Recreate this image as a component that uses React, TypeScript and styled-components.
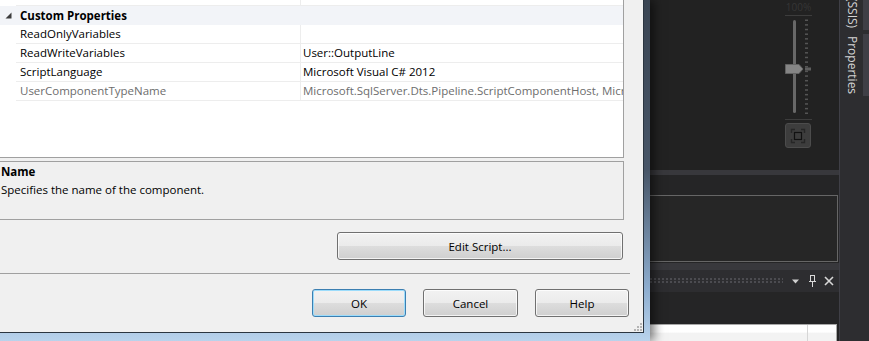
import React from 'react';
import styled, { createGlobalStyle } from 'styled-components';

const GlobalStyle = createGlobalStyle`
  html, body {
    margin: 0;
    padding: 0;
    background: #232323;
    overflow: hidden;
  }
  body {
    font-family: 'Open Sans', 'Noto Sans', sans-serif;
    font-size: 11.5px;
  }
`;

const Screen = styled.div`
  display: flex;
  width: 869px;
  height: 341px;
  overflow: hidden;
`;

/* ---------- dialog ---------- */

const DialogFrame = styled.div`
  position: relative;
  z-index: 1;
  flex: 0 0 650px;
  height: 341px;
  box-sizing: border-box;
  padding: 0 6px 8px 0;
  display: flex;
  background: linear-gradient(180deg, #3a4553 0%, #485668 50%, #8eaed0 85%, #b9d3ec 100%);
  box-shadow: 4px 0 10px rgba(0, 0, 0, 0.55);
`;

const Client = styled.div`
  flex: 1;
  display: flex;
  flex-direction: column;
  background: #f0f0f0;
  color: #000;
  border-right: 1px solid #2b3540;
  border-bottom: 1px solid #2b3540;
`;

const PropGrid = styled.div`
  width: 623px;
  height: 157px;
  background: #fff;
  border-right: 1px solid #a0a0a0;
  border-bottom: 1px solid #a0a0a0;
  overflow: hidden;
`;

const Row = styled.div<{ $h?: number }>`
  display: grid;
  grid-template-columns: 16px 285px 1fr;
  height: ${p => p.$h ?? 19}px;
`;

const Gutter = styled.div``;

const Cell = styled.div<{ $muted?: boolean; $name?: boolean }>`
  box-sizing: border-box;
  border-bottom: 1px solid #ededed;
  border-right: ${p => (p.$name ? '1px solid #ededed' : 'none')};
  padding-left: ${p => (p.$name ? 4 : 2)}px;
  line-height: 18px;
  white-space: nowrap;
  overflow: hidden;
  color: ${p => (p.$muted ? '#6d6d6d' : '#000')};
`;

const CategoryRow = styled.div`
  display: flex;
  align-items: center;
  height: 19px;
  background: #f2f4f8;
`;

const Expander = styled.div`
  width: 16px;
  display: flex;
  justify-content: center;
  align-items: center;
`;

const CategoryTitle = styled.div`
  padding-left: 4px;
  font-weight: 700;
  line-height: 19px;
`;

const DescPane = styled.div`
  margin-top: 3px;
  width: 624px;
  height: 59px;
  box-sizing: border-box;
  padding: 1px 0 0 1px;
  border-top: 1px solid #a0a0a0;
  border-bottom: 1px solid #a0a0a0;
  border-right: 1px solid #a0a0a0;
  line-height: 18px;
`;

const DescTitle = styled.div`
  font-weight: 700;
`;

const ActionRow = styled.div<{ $top: number; $right: number; $gap?: number }>`
  display: flex;
  justify-content: flex-end;
  gap: ${p => p.$gap ?? 0}px;
  margin-top: ${p => p.$top}px;
  padding-right: ${p => p.$right}px;
`;

const Button = styled.button<{ $w: number; $default?: boolean }>`
  width: ${p => p.$w}px;
  height: 28px;
  box-sizing: border-box;
  padding: 0;
  border: 1px solid ${p => (p.$default ? '#3c7fb1' : '#707070')};
  border-radius: 3px;
  background: linear-gradient(180deg, #f2f2f2 0%, #ebebeb 49%, #dddddd 51%, #cfcfcf 100%);
  box-shadow: inset 0 0 0 1px ${p => (p.$default ? '#9cdcfb' : 'rgba(255, 255, 255, 0.75)')};
  font-family: inherit;
  font-size: 11.5px;
  color: #000;
`;

const Separator = styled.div`
  margin-top: 13px;
  width: 630px;
  height: 1px;
  background: #a0a0a0;
`;

const GripRow = styled.div`
  margin-top: auto;
  display: flex;
  justify-content: flex-end;
  padding: 0 1px 1px 0;
`;

/* ---------- IDE background ---------- */

const Ide = styled.div`
  flex: 1;
  display: flex;
  background: #252526;
`;

const DesignColumn = styled.div`
  width: 189px;
  display: flex;
  flex-direction: column;
`;

const Canvas = styled.div`
  height: 170px;
  display: flex;
  justify-content: flex-end;
  padding-right: 27px;
  background: #222222;
`;

const ZoomControl = styled.div`
  width: 27px;
  display: flex;
  flex-direction: column;
  align-items: center;
`;

const ZoomLabel = styled.div`
  width: 27px;
  height: 15px;
  border-bottom: 1px solid #3d3d3d;
  text-align: center;
  font-size: 10px;
  line-height: 14px;
  color: #363636;
`;

const ZoomFoot = styled.div`
  width: 27px;
  border-top: 1px solid #3d3d3d;
  padding-top: 3px;
  display: flex;
`;

const FitButton = styled.div`
  width: 26px;
  height: 25px;
  box-sizing: border-box;
  border: 1px solid #4c4c4c;
  border-radius: 3px;
  background: #3d3d3d;
  display: flex;
  align-items: center;
  justify-content: center;
`;

const Splitter = styled.div<{ $h: number }>`
  height: ${p => p.$h}px;
  background: #38383c;
`;

const Panel = styled.div<{ $h: number; $pt: number }>`
  height: ${p => p.$h}px;
  box-sizing: border-box;
  padding-top: ${p => p.$pt}px;
  background: #252526;
`;

const OutlineBox = styled.div`
  margin-left: -10px;
  margin-right: 1px;
  height: 67px;
  box-sizing: border-box;
  border: 1px solid #666666;
  background: #262626;
`;

const ToolTitle = styled.div`
  height: 22px;
  display: flex;
  align-items: center;
  padding-right: 5px;
  background: #2d2d30;
`;

const GripDots = styled.div`
  flex: 1;
  height: 6px;
  margin-right: 9px;
  background-image: radial-gradient(circle at 1px 1px, #4b4b50 0.9px, transparent 1.1px);
  background-size: 4px 3px;
`;

const TitleIcon = styled.svg<{ $ml?: number }>`
  margin-left: ${p => p.$ml ?? 0}px;
  display: block;
`;

const ListBox = styled.div`
  flex: 1;
  margin-left: -10px;
  margin-right: 2px;
  display: flex;
  border: 1px solid #a8a8a8;
  border-bottom: none;
  background: #fff;
`;

const ListCell = styled.div<{ $w?: number }>`
  flex: ${p => (p.$w ? `0 0 ${p.$w}px` : '1')};
  border-right: ${p => (p.$w ? 'none' : '1px solid #d6d6d6')};
  background: linear-gradient(180deg, #ffffff 0%, #ffffff 45%, #f3f3f3 50%, #f3f3f3 100%);
`;

const TabStrip = styled.div`
  width: 29px;
  border-left: 1px solid #3f3f46;
  background: #2d2d30;
  display: flex;
  flex-direction: column;
  gap: 4px;
  overflow: hidden;
`;

const Tab = styled.div<{ $offset?: number }>`
  display: flex;
  margin-top: ${p => p.$offset ?? 0}px;
`;

const TabLabel = styled.div`
  flex: 1;
  writing-mode: vertical-rl;
  display: flex;
  align-items: center;
  padding: 2px 0 2px 1px;
  color: #d4d4d4;
  font-size: 12px;
  white-space: nowrap;
`;

const TabBar = styled.div`
  width: 6px;
  background: #3f3f46;
`;

/* ---------- data ---------- */

const properties = [
  { name: 'ReadOnlyVariables', value: '' },
  { name: 'ReadWriteVariables', value: 'User::OutputLine' },
  { name: 'ScriptLanguage', value: 'Microsoft Visual C# 2012' },
  {
    name: 'UserComponentTypeName',
    value: 'Microsoft.SqlServer.Dts.Pipeline.ScriptComponentHost, Microsoft.SqlServer.TxScript, Version=11.0.0.0',
    readOnly: true,
  },
];

const ticks = Array.from({ length: 21 }, (_, i) => 3.5 + i * 4.65);

const App: React.FC = () => {
  return (
    <>
      <GlobalStyle />
      <Screen>
        <DialogFrame>
          <Client>
            <PropGrid>
              <Row $h={6}>
                <Gutter />
                <Cell $name />
                <Cell />
              </Row>
              <CategoryRow>
                <Expander>
                  <svg width="7" height="7" viewBox="0 0 7 7">
                    <polygon points="6.5,0.5 6.5,6.5 0.5,6.5" fill="#3c3c3c" />
                  </svg>
                </Expander>
                <CategoryTitle>Custom Properties</CategoryTitle>
              </CategoryRow>
              {properties.map(p => (
                <Row key={p.name}>
                  <Gutter />
                  <Cell $name $muted={p.readOnly}>{p.name}</Cell>
                  <Cell $muted={p.readOnly}>{p.value}</Cell>
                </Row>
              ))}
            </PropGrid>

            <DescPane>
              <DescTitle>Name</DescTitle>
              <div>Specifies the name of the component.</div>
            </DescPane>

            <ActionRow $top={12} $right={20}>
              <Button $w={286}>Edit Script...</Button>
            </ActionRow>

            <Separator />

            <ActionRow $top={15} $right={14} $gap={17}>
              <Button $w={94} $default>OK</Button>
              <Button $w={95}>Cancel</Button>
              <Button $w={94}>Help</Button>
            </ActionRow>

            <GripRow>
              <svg width="8" height="8" viewBox="0 0 8 8">
                {[[6, 0], [6, 3], [3, 3], [6, 6], [3, 6], [0, 6]].map(([x, y]) => (
                  <rect key={`${x}-${y}`} x={x} y={y} width="2" height="2" fill="#b4b4b4" />
                ))}
              </svg>
            </GripRow>
          </Client>
        </DialogFrame>

        <Ide>
          <DesignColumn>
            <Canvas>
              <ZoomControl>
                <ZoomLabel>100%</ZoomLabel>
                <svg width="27" height="103" viewBox="0 0 27 103">
                  <rect x="8" y="4" width="3" height="93" rx="1.5" fill="#686868" />
                  {ticks.map(y => (
                    <rect key={y} x="20" y={y} width="3" height="1.5" fill="#555" />
                  ))}
                  <rect x="20" y="51.5" width="6" height="3" fill="#5e5e5e" />
                  <polygon points="0.5,48.5 14,48.5 18,53 14,57.5 0.5,57.5" fill="#858585" stroke="#626262" />
                </svg>
                <ZoomFoot>
                  <FitButton>
                    <svg width="16" height="16" viewBox="0 0 16 16" fill="none">
                      <path d="M1.5 5V1.5H5M11 1.5h3.5V5M14.5 11v3.5H11M5 14.5H1.5V11" stroke="#262626" strokeWidth="1.4" />
                      <rect x="4.5" y="4.5" width="7" height="7" stroke="#111" strokeWidth="1.2" />
                    </svg>
                  </FitButton>
                </ZoomFoot>
              </ZoomControl>
            </Canvas>

            <Splitter $h={5} />
            <Panel $h={88} $pt={20}>
              <OutlineBox />
            </Panel>
            <Splitter $h={7} />

            <ToolTitle>
              <GripDots />
              <TitleIcon width="7" height="5" viewBox="0 0 7 5">
                <polygon points="0,0.5 7,0.5 3.5,4.5" fill="#d0d0d0" />
              </TitleIcon>
              <TitleIcon $ml={10} width="7" height="12" viewBox="0 0 7 12">
                <rect x="1.5" y="0.5" width="4" height="6" fill="none" stroke="#d8d8d8" />
                <rect x="0" y="6" width="7" height="1" fill="#d8d8d8" />
                <rect x="3" y="7" width="1" height="5" fill="#d8d8d8" />
              </TitleIcon>
              <TitleIcon $ml={8} width="10" height="10" viewBox="0 0 10 10">
                <path d="M1 1l8 8M9 1l-8 8" stroke="#d8d8d8" strokeWidth="1.6" />
              </TitleIcon>
            </ToolTitle>

            <Panel $h={32} $pt={0} />
            <ListBox>
              <ListCell />
              <ListCell $w={28} />
            </ListBox>
          </DesignColumn>

          <TabStrip>
            <Tab $offset={-92}>
              <TabLabel>Getting Started (SSIS)</TabLabel>
              <TabBar />
            </Tab>
            <Tab>
              <TabLabel>Properties</TabLabel>
              <TabBar />
            </Tab>
          </TabStrip>
        </Ide>
      </Screen>
    </>
  );
};

export default App;
